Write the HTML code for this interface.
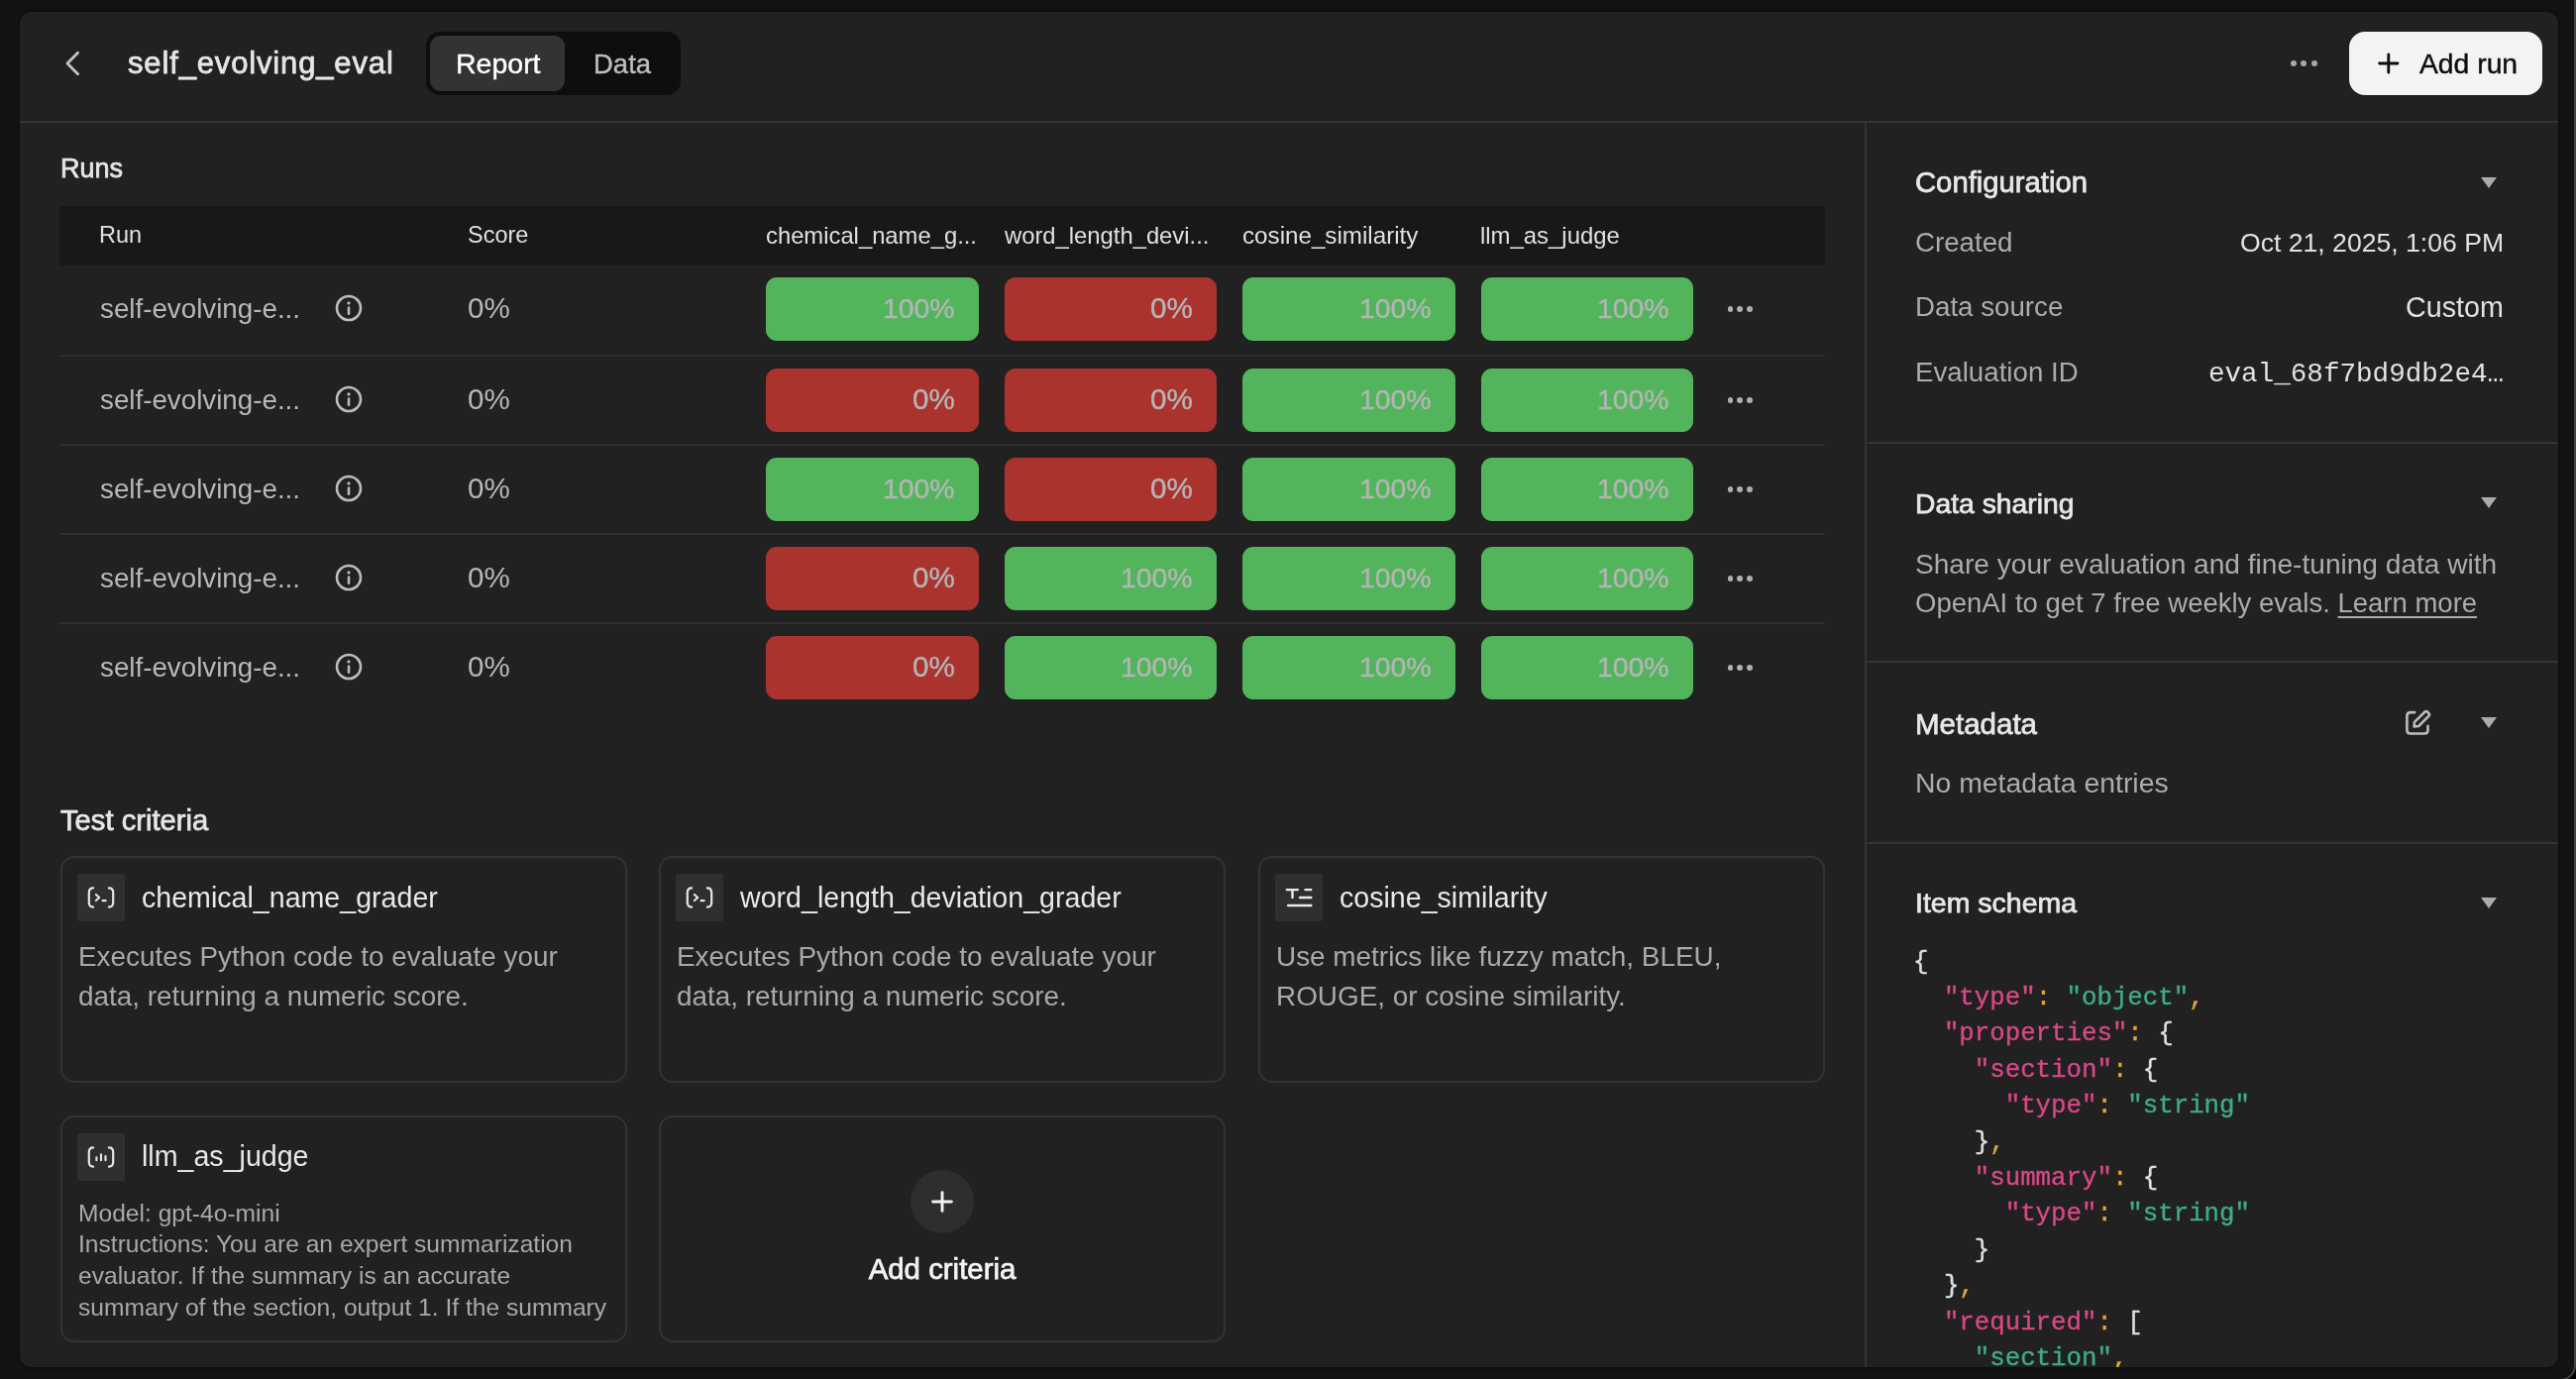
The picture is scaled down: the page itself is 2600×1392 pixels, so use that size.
<!DOCTYPE html>
<html><head><meta charset="utf-8"><title>self_evolving_eval</title>
<style>
html,body{margin:0;padding:0;width:2600px;height:1392px;overflow:hidden;background:#000;}
.r{position:absolute;}
.t{position:absolute;white-space:pre;font-family:'Liberation Sans', sans-serif;-webkit-font-smoothing:antialiased;will-change:transform;}
</style></head><body>
<div class="r" style="left:-20px;top:-20px;width:2620px;height:1414px;background:#131313;border:2px solid #464646;border-radius:16px;box-sizing:border-box;"></div>
<div class="r" style="left:20px;top:12px;width:2562px;height:1368px;background:#212121;border-radius:12px;box-shadow:0 0 4px 1px rgba(0,0,0,0.35);"></div>
<svg class="r" style="left:62px;top:48px;" width="22" height="32" viewBox="0 0 22 32"><path d="M16.6 5.3 L6 16 L16.6 26.7" fill="none" stroke="#c4c4c4" stroke-width="2.8" stroke-linecap="round" stroke-linejoin="round"/></svg>
<div class="t" style="left:129px;top:44.05px;font-size:31px;line-height:40px;color:#e6e6e6;font-weight:400;font-family:'Liberation Sans', sans-serif;-webkit-text-stroke-width:0.75px;letter-spacing:0.85px;">self_evolving_eval</div>
<div class="r" style="left:430px;top:32px;width:257px;height:64px;background:#0e0e0e;border-radius:14px;"></div>
<div class="r" style="left:434px;top:36px;width:136px;height:56px;background:#333333;border-radius:11px;"></div>
<div class="t" style="left:459.5px;top:46.32px;font-size:28.5px;line-height:37px;color:#ffffff;font-weight:400;font-family:'Liberation Sans', sans-serif;-webkit-text-stroke-width:0.4px;">Report</div>
<div class="t" style="left:599px;top:47.17px;font-size:27.5px;line-height:36px;color:#bdbdbd;font-weight:400;font-family:'Liberation Sans', sans-serif;-webkit-text-stroke-width:0.4px;">Data</div>
<div class="r" style="left:2311.5px;top:61px;width:6px;height:6px;background:#a8a8a8;border-radius:3px;"></div>
<div class="r" style="left:2322px;top:61px;width:6px;height:6px;background:#a8a8a8;border-radius:3px;"></div>
<div class="r" style="left:2332.5px;top:61px;width:6px;height:6px;background:#a8a8a8;border-radius:3px;"></div>
<div class="r" style="left:2371px;top:32px;width:195px;height:64px;background:#f3f3f3;border-radius:16px;"></div>
<svg class="r" style="left:2398px;top:52px;" width="26" height="24" viewBox="0 0 26 24"><path d="M12.8 2.8 V21.2 M3.6 12 H22 " stroke="#0d0d0d" stroke-width="2.8" stroke-linecap="round"/></svg>
<div class="t" style="left:2442px;top:45.99px;font-size:28.3px;line-height:37px;color:#0d0d0d;font-weight:400;font-family:'Liberation Sans', sans-serif;-webkit-text-stroke-width:0.4px;">Add run</div>
<div class="r" style="left:20px;top:122px;width:2562px;height:2px;background:#333333;border-radius:0px;"></div>
<div class="r" style="left:1882px;top:124px;width:2px;height:1256px;background:#333333;border-radius:0px;"></div>
<div class="t" style="left:61px;top:153.14px;font-size:27px;line-height:35px;color:#e6e6e6;font-weight:400;font-family:'Liberation Sans', sans-serif;-webkit-text-stroke-width:0.75px;">Runs</div>
<div class="r" style="left:60px;top:208px;width:1782px;height:60px;background:#181818;border-radius:0px;"></div>
<div class="t" style="left:100px;top:222.35px;font-size:23.5px;line-height:31px;color:#e0e0e0;font-weight:400;font-family:'Liberation Sans', sans-serif;">Run</div>
<div class="t" style="left:472px;top:222.35px;font-size:23.5px;line-height:31px;color:#e0e0e0;font-weight:400;font-family:'Liberation Sans', sans-serif;">Score</div>
<div class="t" style="left:773px;top:222.25px;font-size:23.8px;line-height:31px;color:#e0e0e0;font-weight:400;font-family:'Liberation Sans', sans-serif;">chemical_name_g...</div>
<div class="t" style="left:1013.5px;top:222.25px;font-size:23.8px;line-height:31px;color:#e0e0e0;font-weight:400;font-family:'Liberation Sans', sans-serif;">word_length_devi...</div>
<div class="t" style="left:1253.5px;top:222.11px;font-size:24.2px;line-height:31px;color:#e0e0e0;font-weight:400;font-family:'Liberation Sans', sans-serif;">cosine_similarity</div>
<div class="t" style="left:1494px;top:222.21px;font-size:23.9px;line-height:31px;color:#e0e0e0;font-weight:400;font-family:'Liberation Sans', sans-serif;">llm_as_judge</div>
<div class="t" style="left:100.5px;top:294.08px;font-size:27.75px;line-height:36px;color:#b8b8b8;font-weight:400;font-family:'Liberation Sans', sans-serif;">self-evolving-e...</div>
<svg class="r" style="left:337px;top:296px;" width="30" height="30" viewBox="0 0 30 30"><circle cx="15" cy="15" r="12" fill="none" stroke="#bcbcbc" stroke-width="2.6"/><path d="M15 14.6 V20.8" stroke="#bcbcbc" stroke-width="2.5" stroke-linecap="round"/><circle cx="15" cy="9.9" r="1.6" fill="#bcbcbc"/></svg>
<div class="t" style="left:471.5px;top:292.44px;font-size:29.6px;line-height:38px;color:#b8b8b8;font-weight:400;font-family:'Liberation Sans', sans-serif;">0%</div>
<div class="r" style="left:773px;top:280px;width:215px;height:64px;background:#52b55c;border-radius:11px;"></div>
<div class="t" style="right:1636.5px;top:293.35px;font-size:28.4px;line-height:37px;color:#b5b5b5;font-weight:400;font-family:'Liberation Sans', sans-serif;-webkit-text-stroke-width:0.4px;">100%</div>
<div class="r" style="left:1014px;top:280px;width:214px;height:64px;background:#aa332d;border-radius:11px;"></div>
<div class="t" style="right:1396.5px;top:292.44px;font-size:29.6px;line-height:38px;color:#b5b5b5;font-weight:400;font-family:'Liberation Sans', sans-serif;-webkit-text-stroke-width:0.4px;">0%</div>
<div class="r" style="left:1254px;top:280px;width:215px;height:64px;background:#52b55c;border-radius:11px;"></div>
<div class="t" style="right:1155.5px;top:293.35px;font-size:28.4px;line-height:37px;color:#b5b5b5;font-weight:400;font-family:'Liberation Sans', sans-serif;-webkit-text-stroke-width:0.4px;">100%</div>
<div class="r" style="left:1495px;top:280px;width:214px;height:64px;background:#52b55c;border-radius:11px;"></div>
<div class="t" style="right:915.5px;top:293.35px;font-size:28.4px;line-height:37px;color:#b5b5b5;font-weight:400;font-family:'Liberation Sans', sans-serif;-webkit-text-stroke-width:0.4px;">100%</div>
<div class="r" style="left:1743.5px;top:309.1px;width:5.8px;height:5.8px;background:#b0b0b0;border-radius:3px;"></div>
<div class="r" style="left:1753.2px;top:309.1px;width:5.8px;height:5.8px;background:#b0b0b0;border-radius:3px;"></div>
<div class="r" style="left:1762.9px;top:309.1px;width:5.8px;height:5.8px;background:#b0b0b0;border-radius:3px;"></div>
<div class="r" style="left:60px;top:358px;width:1782px;height:2px;background:#2f2f2f;border-radius:0px;"></div>
<div class="t" style="left:100.5px;top:386.08px;font-size:27.75px;line-height:36px;color:#b8b8b8;font-weight:400;font-family:'Liberation Sans', sans-serif;">self-evolving-e...</div>
<svg class="r" style="left:337px;top:388px;" width="30" height="30" viewBox="0 0 30 30"><circle cx="15" cy="15" r="12" fill="none" stroke="#bcbcbc" stroke-width="2.6"/><path d="M15 14.6 V20.8" stroke="#bcbcbc" stroke-width="2.5" stroke-linecap="round"/><circle cx="15" cy="9.9" r="1.6" fill="#bcbcbc"/></svg>
<div class="t" style="left:471.5px;top:384.44px;font-size:29.6px;line-height:38px;color:#b8b8b8;font-weight:400;font-family:'Liberation Sans', sans-serif;">0%</div>
<div class="r" style="left:773px;top:372px;width:215px;height:64px;background:#aa332d;border-radius:11px;"></div>
<div class="t" style="right:1636.5px;top:384.44px;font-size:29.6px;line-height:38px;color:#b5b5b5;font-weight:400;font-family:'Liberation Sans', sans-serif;-webkit-text-stroke-width:0.4px;">0%</div>
<div class="r" style="left:1014px;top:372px;width:214px;height:64px;background:#aa332d;border-radius:11px;"></div>
<div class="t" style="right:1396.5px;top:384.44px;font-size:29.6px;line-height:38px;color:#b5b5b5;font-weight:400;font-family:'Liberation Sans', sans-serif;-webkit-text-stroke-width:0.4px;">0%</div>
<div class="r" style="left:1254px;top:372px;width:215px;height:64px;background:#52b55c;border-radius:11px;"></div>
<div class="t" style="right:1155.5px;top:385.35px;font-size:28.4px;line-height:37px;color:#b5b5b5;font-weight:400;font-family:'Liberation Sans', sans-serif;-webkit-text-stroke-width:0.4px;">100%</div>
<div class="r" style="left:1495px;top:372px;width:214px;height:64px;background:#52b55c;border-radius:11px;"></div>
<div class="t" style="right:915.5px;top:385.35px;font-size:28.4px;line-height:37px;color:#b5b5b5;font-weight:400;font-family:'Liberation Sans', sans-serif;-webkit-text-stroke-width:0.4px;">100%</div>
<div class="r" style="left:1743.5px;top:401.1px;width:5.8px;height:5.8px;background:#b0b0b0;border-radius:3px;"></div>
<div class="r" style="left:1753.2px;top:401.1px;width:5.8px;height:5.8px;background:#b0b0b0;border-radius:3px;"></div>
<div class="r" style="left:1762.9px;top:401.1px;width:5.8px;height:5.8px;background:#b0b0b0;border-radius:3px;"></div>
<div class="r" style="left:60px;top:448px;width:1782px;height:2px;background:#2f2f2f;border-radius:0px;"></div>
<div class="t" style="left:100.5px;top:476.08px;font-size:27.75px;line-height:36px;color:#b8b8b8;font-weight:400;font-family:'Liberation Sans', sans-serif;">self-evolving-e...</div>
<svg class="r" style="left:337px;top:478px;" width="30" height="30" viewBox="0 0 30 30"><circle cx="15" cy="15" r="12" fill="none" stroke="#bcbcbc" stroke-width="2.6"/><path d="M15 14.6 V20.8" stroke="#bcbcbc" stroke-width="2.5" stroke-linecap="round"/><circle cx="15" cy="9.9" r="1.6" fill="#bcbcbc"/></svg>
<div class="t" style="left:471.5px;top:474.44px;font-size:29.6px;line-height:38px;color:#b8b8b8;font-weight:400;font-family:'Liberation Sans', sans-serif;">0%</div>
<div class="r" style="left:773px;top:462px;width:215px;height:64px;background:#52b55c;border-radius:11px;"></div>
<div class="t" style="right:1636.5px;top:475.35px;font-size:28.4px;line-height:37px;color:#b5b5b5;font-weight:400;font-family:'Liberation Sans', sans-serif;-webkit-text-stroke-width:0.4px;">100%</div>
<div class="r" style="left:1014px;top:462px;width:214px;height:64px;background:#aa332d;border-radius:11px;"></div>
<div class="t" style="right:1396.5px;top:474.44px;font-size:29.6px;line-height:38px;color:#b5b5b5;font-weight:400;font-family:'Liberation Sans', sans-serif;-webkit-text-stroke-width:0.4px;">0%</div>
<div class="r" style="left:1254px;top:462px;width:215px;height:64px;background:#52b55c;border-radius:11px;"></div>
<div class="t" style="right:1155.5px;top:475.35px;font-size:28.4px;line-height:37px;color:#b5b5b5;font-weight:400;font-family:'Liberation Sans', sans-serif;-webkit-text-stroke-width:0.4px;">100%</div>
<div class="r" style="left:1495px;top:462px;width:214px;height:64px;background:#52b55c;border-radius:11px;"></div>
<div class="t" style="right:915.5px;top:475.35px;font-size:28.4px;line-height:37px;color:#b5b5b5;font-weight:400;font-family:'Liberation Sans', sans-serif;-webkit-text-stroke-width:0.4px;">100%</div>
<div class="r" style="left:1743.5px;top:491.1px;width:5.8px;height:5.8px;background:#b0b0b0;border-radius:3px;"></div>
<div class="r" style="left:1753.2px;top:491.1px;width:5.8px;height:5.8px;background:#b0b0b0;border-radius:3px;"></div>
<div class="r" style="left:1762.9px;top:491.1px;width:5.8px;height:5.8px;background:#b0b0b0;border-radius:3px;"></div>
<div class="r" style="left:60px;top:538px;width:1782px;height:2px;background:#2f2f2f;border-radius:0px;"></div>
<div class="t" style="left:100.5px;top:566.08px;font-size:27.75px;line-height:36px;color:#b8b8b8;font-weight:400;font-family:'Liberation Sans', sans-serif;">self-evolving-e...</div>
<svg class="r" style="left:337px;top:568px;" width="30" height="30" viewBox="0 0 30 30"><circle cx="15" cy="15" r="12" fill="none" stroke="#bcbcbc" stroke-width="2.6"/><path d="M15 14.6 V20.8" stroke="#bcbcbc" stroke-width="2.5" stroke-linecap="round"/><circle cx="15" cy="9.9" r="1.6" fill="#bcbcbc"/></svg>
<div class="t" style="left:471.5px;top:564.44px;font-size:29.6px;line-height:38px;color:#b8b8b8;font-weight:400;font-family:'Liberation Sans', sans-serif;">0%</div>
<div class="r" style="left:773px;top:552px;width:215px;height:64px;background:#aa332d;border-radius:11px;"></div>
<div class="t" style="right:1636.5px;top:564.44px;font-size:29.6px;line-height:38px;color:#b5b5b5;font-weight:400;font-family:'Liberation Sans', sans-serif;-webkit-text-stroke-width:0.4px;">0%</div>
<div class="r" style="left:1014px;top:552px;width:214px;height:64px;background:#52b55c;border-radius:11px;"></div>
<div class="t" style="right:1396.5px;top:565.35px;font-size:28.4px;line-height:37px;color:#b5b5b5;font-weight:400;font-family:'Liberation Sans', sans-serif;-webkit-text-stroke-width:0.4px;">100%</div>
<div class="r" style="left:1254px;top:552px;width:215px;height:64px;background:#52b55c;border-radius:11px;"></div>
<div class="t" style="right:1155.5px;top:565.35px;font-size:28.4px;line-height:37px;color:#b5b5b5;font-weight:400;font-family:'Liberation Sans', sans-serif;-webkit-text-stroke-width:0.4px;">100%</div>
<div class="r" style="left:1495px;top:552px;width:214px;height:64px;background:#52b55c;border-radius:11px;"></div>
<div class="t" style="right:915.5px;top:565.35px;font-size:28.4px;line-height:37px;color:#b5b5b5;font-weight:400;font-family:'Liberation Sans', sans-serif;-webkit-text-stroke-width:0.4px;">100%</div>
<div class="r" style="left:1743.5px;top:581.1px;width:5.8px;height:5.8px;background:#b0b0b0;border-radius:3px;"></div>
<div class="r" style="left:1753.2px;top:581.1px;width:5.8px;height:5.8px;background:#b0b0b0;border-radius:3px;"></div>
<div class="r" style="left:1762.9px;top:581.1px;width:5.8px;height:5.8px;background:#b0b0b0;border-radius:3px;"></div>
<div class="r" style="left:60px;top:628px;width:1782px;height:2px;background:#2f2f2f;border-radius:0px;"></div>
<div class="t" style="left:100.5px;top:656.08px;font-size:27.75px;line-height:36px;color:#b8b8b8;font-weight:400;font-family:'Liberation Sans', sans-serif;">self-evolving-e...</div>
<svg class="r" style="left:337px;top:658px;" width="30" height="30" viewBox="0 0 30 30"><circle cx="15" cy="15" r="12" fill="none" stroke="#bcbcbc" stroke-width="2.6"/><path d="M15 14.6 V20.8" stroke="#bcbcbc" stroke-width="2.5" stroke-linecap="round"/><circle cx="15" cy="9.9" r="1.6" fill="#bcbcbc"/></svg>
<div class="t" style="left:471.5px;top:654.44px;font-size:29.6px;line-height:38px;color:#b8b8b8;font-weight:400;font-family:'Liberation Sans', sans-serif;">0%</div>
<div class="r" style="left:773px;top:642px;width:215px;height:64px;background:#aa332d;border-radius:11px;"></div>
<div class="t" style="right:1636.5px;top:654.44px;font-size:29.6px;line-height:38px;color:#b5b5b5;font-weight:400;font-family:'Liberation Sans', sans-serif;-webkit-text-stroke-width:0.4px;">0%</div>
<div class="r" style="left:1014px;top:642px;width:214px;height:64px;background:#52b55c;border-radius:11px;"></div>
<div class="t" style="right:1396.5px;top:655.35px;font-size:28.4px;line-height:37px;color:#b5b5b5;font-weight:400;font-family:'Liberation Sans', sans-serif;-webkit-text-stroke-width:0.4px;">100%</div>
<div class="r" style="left:1254px;top:642px;width:215px;height:64px;background:#52b55c;border-radius:11px;"></div>
<div class="t" style="right:1155.5px;top:655.35px;font-size:28.4px;line-height:37px;color:#b5b5b5;font-weight:400;font-family:'Liberation Sans', sans-serif;-webkit-text-stroke-width:0.4px;">100%</div>
<div class="r" style="left:1495px;top:642px;width:214px;height:64px;background:#52b55c;border-radius:11px;"></div>
<div class="t" style="right:915.5px;top:655.35px;font-size:28.4px;line-height:37px;color:#b5b5b5;font-weight:400;font-family:'Liberation Sans', sans-serif;-webkit-text-stroke-width:0.4px;">100%</div>
<div class="r" style="left:1743.5px;top:671.1px;width:5.8px;height:5.8px;background:#b0b0b0;border-radius:3px;"></div>
<div class="r" style="left:1753.2px;top:671.1px;width:5.8px;height:5.8px;background:#b0b0b0;border-radius:3px;"></div>
<div class="r" style="left:1762.9px;top:671.1px;width:5.8px;height:5.8px;background:#b0b0b0;border-radius:3px;"></div>
<div class="t" style="left:60.5px;top:808.88px;font-size:29.2px;line-height:38px;color:#e6e6e6;font-weight:400;font-family:'Liberation Sans', sans-serif;-webkit-text-stroke-width:0.75px;">Test criteria</div>
<div class="r" style="left:60.5px;top:864px;width:572px;height:229px;border:2px solid #333;border-radius:14px;box-sizing:border-box;"></div>
<div class="r" style="left:665px;top:864px;width:572px;height:229px;border:2px solid #333;border-radius:14px;box-sizing:border-box;"></div>
<div class="r" style="left:1270px;top:864px;width:572px;height:229px;border:2px solid #333;border-radius:14px;box-sizing:border-box;"></div>
<div class="r" style="left:60.5px;top:1126px;width:572px;height:229px;border:2px solid #333;border-radius:14px;box-sizing:border-box;"></div>
<div class="r" style="left:665px;top:1126px;width:572px;height:229px;border:2px solid #333;border-radius:14px;box-sizing:border-box;"></div>
<div class="r" style="left:78px;top:882px;width:48px;height:48px;background:#2f2f2f;border-radius:2px;"></div>
<svg class="r" style="left:78px;top:882px;" width="48" height="48" viewBox="0 0 48 48"><path d="M16.1 14.4 C13 14.4 11.8 16 11.8 19 V29.1 C11.8 32.1 13 33.7 16.1 33.7 M31.9 14.4 C35 14.4 36.2 16 36.2 19 V29.1 C36.2 32.1 35 33.7 31.9 33.7" fill="none" stroke="#e6e6e6" stroke-width="2.2" stroke-linecap="round"/><path d="M18.9 20.9 L22.2 24 L18.9 27.1 M25.5 27.1 H28.7" fill="none" stroke="#e6e6e6" stroke-width="2.1" stroke-linecap="round" stroke-linejoin="round"/></svg>
<div class="t" style="left:143px;top:887.58px;font-size:28.6px;line-height:37px;color:#e8e8e8;font-weight:400;font-family:'Liberation Sans', sans-serif;">chemical_name_grader</div>
<div class="t" style="left:79px;top:948.33px;font-size:27.9px;line-height:36px;color:#a9a9a9;font-weight:400;font-family:'Liberation Sans', sans-serif;">Executes Python code to evaluate your</div>
<div class="t" style="left:79px;top:988.33px;font-size:27.9px;line-height:36px;color:#a9a9a9;font-weight:400;font-family:'Liberation Sans', sans-serif;">data, returning a numeric score.</div>
<div class="r" style="left:682px;top:882px;width:48px;height:48px;background:#2f2f2f;border-radius:2px;"></div>
<svg class="r" style="left:682px;top:882px;" width="48" height="48" viewBox="0 0 48 48"><path d="M16.1 14.4 C13 14.4 11.8 16 11.8 19 V29.1 C11.8 32.1 13 33.7 16.1 33.7 M31.9 14.4 C35 14.4 36.2 16 36.2 19 V29.1 C36.2 32.1 35 33.7 31.9 33.7" fill="none" stroke="#e6e6e6" stroke-width="2.2" stroke-linecap="round"/><path d="M18.9 20.9 L22.2 24 L18.9 27.1 M25.5 27.1 H28.7" fill="none" stroke="#e6e6e6" stroke-width="2.1" stroke-linecap="round" stroke-linejoin="round"/></svg>
<div class="t" style="left:747px;top:887.58px;font-size:28.6px;line-height:37px;color:#e8e8e8;font-weight:400;font-family:'Liberation Sans', sans-serif;">word_length_deviation_grader</div>
<div class="t" style="left:683px;top:948.33px;font-size:27.9px;line-height:36px;color:#a9a9a9;font-weight:400;font-family:'Liberation Sans', sans-serif;">Executes Python code to evaluate your</div>
<div class="t" style="left:683px;top:988.33px;font-size:27.9px;line-height:36px;color:#a9a9a9;font-weight:400;font-family:'Liberation Sans', sans-serif;">data, returning a numeric score.</div>
<div class="r" style="left:1287px;top:882px;width:48px;height:48px;background:#2f2f2f;border-radius:2px;"></div>
<svg class="r" style="left:1287px;top:882px;" width="48" height="48" viewBox="0 0 48 48"><path d="M11.8 16.1 H22.9 M17.5 16.1 V24 M30.5 16.1 H36.3 M25 24 H36.3 M13.1 32 H36.3" fill="none" stroke="#ececec" stroke-width="2.4" stroke-linecap="round"/></svg>
<div class="t" style="left:1352px;top:887.58px;font-size:28.6px;line-height:37px;color:#e8e8e8;font-weight:400;font-family:'Liberation Sans', sans-serif;">cosine_similarity</div>
<div class="t" style="left:1288px;top:948.33px;font-size:27.9px;line-height:36px;color:#a9a9a9;font-weight:400;font-family:'Liberation Sans', sans-serif;">Use metrics like fuzzy match, BLEU,</div>
<div class="t" style="left:1288px;top:988.33px;font-size:27.9px;line-height:36px;color:#a9a9a9;font-weight:400;font-family:'Liberation Sans', sans-serif;">ROUGE, or cosine similarity.</div>
<div class="r" style="left:78px;top:1143.5px;width:48px;height:48px;background:#2f2f2f;border-radius:2px;"></div>
<svg class="r" style="left:78px;top:1143.5px;" width="48" height="48" viewBox="0 0 48 48"><path d="M16.1 14.4 C13 14.4 11.8 16 11.8 19 V29.1 C11.8 32.1 13 33.7 16.1 33.7 M31.9 14.4 C35 14.4 36.2 16 36.2 19 V29.1 C36.2 32.1 35 33.7 31.9 33.7" fill="none" stroke="#e6e6e6" stroke-width="2.2" stroke-linecap="round"/><path d="M19.4 24.3 V27.3 M24 21.2 V27.3 M28.5 23 V27.3" fill="none" stroke="#e6e6e6" stroke-width="2.1" stroke-linecap="round"/></svg>
<div class="t" style="left:143px;top:1149.08px;font-size:28.6px;line-height:37px;color:#e8e8e8;font-weight:400;font-family:'Liberation Sans', sans-serif;">llm_as_judge</div>
<div class="t" style="left:79px;top:1208.67px;font-size:24.6px;line-height:32px;color:#a9a9a9;font-weight:400;font-family:'Liberation Sans', sans-serif;">Model: gpt-4o-mini</div>
<div class="t" style="left:79px;top:1240.47px;font-size:24.6px;line-height:32px;color:#a9a9a9;font-weight:400;font-family:'Liberation Sans', sans-serif;">Instructions: You are an expert summarization</div>
<div class="t" style="left:79px;top:1272.27px;font-size:24.6px;line-height:32px;color:#a9a9a9;font-weight:400;font-family:'Liberation Sans', sans-serif;">evaluator. If the summary is an accurate</div>
<div class="t" style="left:79px;top:1304.07px;font-size:24.6px;line-height:32px;color:#a9a9a9;font-weight:400;font-family:'Liberation Sans', sans-serif;">summary of the section, output 1. If the summary</div>
<div class="r" style="left:919px;top:1181px;width:64px;height:64px;background:#2e2e2e;border-radius:32px;"></div>
<svg class="r" style="left:938px;top:1200px;" width="26" height="26" viewBox="0 0 26 26"><path d="M13 3.6 V22.4 M3.6 13 H22.4" stroke="#f2f2f2" stroke-width="2.9" stroke-linecap="round"/></svg>
<div class="t" style="left:750.5px;width:400px;text-align:center;top:1261.81px;font-size:29.4px;line-height:38px;color:#f4f4f4;font-weight:400;font-family:'Liberation Sans', sans-serif;-webkit-text-stroke-width:0.75px;">Add criteria</div>
<div class="t" style="left:1933px;top:165.46px;font-size:29.25px;line-height:38px;color:#e8e8e8;font-weight:400;font-family:'Liberation Sans', sans-serif;-webkit-text-stroke-width:0.75px;">Configuration</div>
<svg class="r" style="left:2504px;top:178.5px;" width="16" height="11" viewBox="0 0 16 11"><path d="M0 0 H16 L8 11 Z" fill="#ababab"/></svg>
<div class="t" style="left:1933px;top:226.80px;font-size:27.7px;line-height:36px;color:#acacac;font-weight:400;font-family:'Liberation Sans', sans-serif;">Created</div>
<div class="t" style="right:73px;top:227.68px;font-size:26.6px;line-height:35px;color:#e2e2e2;font-weight:400;font-family:'Liberation Sans', sans-serif;">Oct 21, 2025, 1:06 PM</div>
<div class="t" style="left:1933px;top:292.40px;font-size:27.7px;line-height:36px;color:#acacac;font-weight:400;font-family:'Liberation Sans', sans-serif;">Data source</div>
<div class="t" style="right:73px;top:291.55px;font-size:28.7px;line-height:37px;color:#e2e2e2;font-weight:400;font-family:'Liberation Sans', sans-serif;">Custom</div>
<div class="t" style="left:1933px;top:358.20px;font-size:27.7px;line-height:36px;color:#acacac;font-weight:400;font-family:'Liberation Sans', sans-serif;">Evaluation ID</div>
<div class="t" style="right:73px;top:360.46px;font-size:27.6px;line-height:36px;color:#e2e2e2;font-weight:400;font-family:'Liberation Mono', monospace;letter-spacing:0px;">eval_68f7bd9db2e4…</div>
<div class="r" style="left:1884px;top:446px;width:698px;height:2px;background:#333333;border-radius:0px;"></div>
<div class="t" style="left:1933px;top:490.29px;font-size:28.3px;line-height:37px;color:#e8e8e8;font-weight:400;font-family:'Liberation Sans', sans-serif;-webkit-text-stroke-width:0.75px;">Data sharing</div>
<svg class="r" style="left:2504px;top:502.1px;" width="16" height="11" viewBox="0 0 16 11"><path d="M0 0 H16 L8 11 Z" fill="#ababab"/></svg>
<div class="t" style="left:1933px;top:551.26px;font-size:28.1px;line-height:37px;color:#acacac;font-weight:400;font-family:'Liberation Sans', sans-serif;">Share your evaluation and fine-tuning data with</div>
<div class="t" style="left:1933px;top:591.47px;font-size:27.5px;line-height:36px;color:#acacac;font-weight:400;font-family:'Liberation Sans', sans-serif;">OpenAI to get 7 free weekly evals. <span style="text-decoration:underline;text-underline-offset:4px;text-decoration-thickness:2px">Learn more</span></div>
<div class="r" style="left:1884px;top:667px;width:698px;height:2px;background:#333333;border-radius:0px;"></div>
<div class="t" style="left:1933px;top:711.77px;font-size:29.5px;line-height:38px;color:#e8e8e8;font-weight:400;font-family:'Liberation Sans', sans-serif;-webkit-text-stroke-width:0.75px;">Metadata</div>
<svg class="r" style="left:2426px;top:714px;" width="30" height="30" viewBox="0 0 30 30"><path d="M11.2 5.1 H7 Q3.4 5.1 3.4 8.7 V22.9 Q3.4 26.5 7 26.5 H20.9 Q24.5 26.5 24.5 22.9 V18.8" fill="none" stroke="#bdbdbd" stroke-width="2.6" stroke-linecap="round"/><path d="M10.6 19.4 L11 14.9 L21.3 4.8 Q22.8 3.4 24.3 4.8 L25.3 5.8 Q26.7 7.3 25.3 8.8 L15.1 19 Z" fill="none" stroke="#bdbdbd" stroke-width="2.6" stroke-linejoin="round"/></svg>
<svg class="r" style="left:2504px;top:723.5px;" width="16" height="11" viewBox="0 0 16 11"><path d="M0 0 H16 L8 11 Z" fill="#ababab"/></svg>
<div class="t" style="left:1933px;top:771.65px;font-size:28.4px;line-height:37px;color:#acacac;font-weight:400;font-family:'Liberation Sans', sans-serif;">No metadata entries</div>
<div class="r" style="left:1884px;top:850px;width:698px;height:2px;background:#333333;border-radius:0px;"></div>
<div class="t" style="left:1933px;top:893.32px;font-size:28.5px;line-height:37px;color:#e8e8e8;font-weight:400;font-family:'Liberation Sans', sans-serif;-webkit-text-stroke-width:0.75px;">Item schema</div>
<svg class="r" style="left:2504px;top:905.8px;" width="16" height="11" viewBox="0 0 16 11"><path d="M0 0 H16 L8 11 Z" fill="#ababab"/></svg>
<div class="r" style="left:1884px;top:940px;width:698px;height:440px;overflow:hidden;">
<div class="t" style="left:46.5px;top:13.65px;font-size:25.75px;line-height:36px;font-family:'Liberation Mono', monospace;white-space:pre;-webkit-text-stroke-width:0.35px"><span style="color:#e0e0e0">{</span></div><div class="t" style="left:46.5px;top:50.05px;font-size:25.75px;line-height:36px;font-family:'Liberation Mono', monospace;white-space:pre;-webkit-text-stroke-width:0.35px">  <span style="color:#d94787">"type"</span><span style="color:#e5a43b">:</span> <span style="color:#3fac87">"object"</span><span style="color:#e5a43b">,</span></div><div class="t" style="left:46.5px;top:86.45px;font-size:25.75px;line-height:36px;font-family:'Liberation Mono', monospace;white-space:pre;-webkit-text-stroke-width:0.35px">  <span style="color:#d94787">"properties"</span><span style="color:#e5a43b">:</span> <span style="color:#e0e0e0">{</span></div><div class="t" style="left:46.5px;top:122.85px;font-size:25.75px;line-height:36px;font-family:'Liberation Mono', monospace;white-space:pre;-webkit-text-stroke-width:0.35px">    <span style="color:#d94787">"section"</span><span style="color:#e5a43b">:</span> <span style="color:#e0e0e0">{</span></div><div class="t" style="left:46.5px;top:159.25px;font-size:25.75px;line-height:36px;font-family:'Liberation Mono', monospace;white-space:pre;-webkit-text-stroke-width:0.35px">      <span style="color:#d94787">"type"</span><span style="color:#e5a43b">:</span> <span style="color:#3fac87">"string"</span></div><div class="t" style="left:46.5px;top:195.65px;font-size:25.75px;line-height:36px;font-family:'Liberation Mono', monospace;white-space:pre;-webkit-text-stroke-width:0.35px">    <span style="color:#e0e0e0">}</span><span style="color:#e5a43b">,</span></div><div class="t" style="left:46.5px;top:232.05px;font-size:25.75px;line-height:36px;font-family:'Liberation Mono', monospace;white-space:pre;-webkit-text-stroke-width:0.35px">    <span style="color:#d94787">"summary"</span><span style="color:#e5a43b">:</span> <span style="color:#e0e0e0">{</span></div><div class="t" style="left:46.5px;top:268.45px;font-size:25.75px;line-height:36px;font-family:'Liberation Mono', monospace;white-space:pre;-webkit-text-stroke-width:0.35px">      <span style="color:#d94787">"type"</span><span style="color:#e5a43b">:</span> <span style="color:#3fac87">"string"</span></div><div class="t" style="left:46.5px;top:304.85px;font-size:25.75px;line-height:36px;font-family:'Liberation Mono', monospace;white-space:pre;-webkit-text-stroke-width:0.35px">    <span style="color:#e0e0e0">}</span></div><div class="t" style="left:46.5px;top:341.25px;font-size:25.75px;line-height:36px;font-family:'Liberation Mono', monospace;white-space:pre;-webkit-text-stroke-width:0.35px">  <span style="color:#e0e0e0">}</span><span style="color:#e5a43b">,</span></div><div class="t" style="left:46.5px;top:377.65px;font-size:25.75px;line-height:36px;font-family:'Liberation Mono', monospace;white-space:pre;-webkit-text-stroke-width:0.35px">  <span style="color:#d94787">"required"</span><span style="color:#e5a43b">:</span> <span style="color:#e0e0e0">[</span></div><div class="t" style="left:46.5px;top:414.05px;font-size:25.75px;line-height:36px;font-family:'Liberation Mono', monospace;white-space:pre;-webkit-text-stroke-width:0.35px">    <span style="color:#3fac87">"section"</span><span style="color:#e5a43b">,</span></div><div class="t" style="left:46.5px;top:450.45px;font-size:25.75px;line-height:36px;font-family:'Liberation Mono', monospace;white-space:pre;-webkit-text-stroke-width:0.35px">    <span style="color:#3fac87">"summary"</span></div>
</div>
</body></html>
